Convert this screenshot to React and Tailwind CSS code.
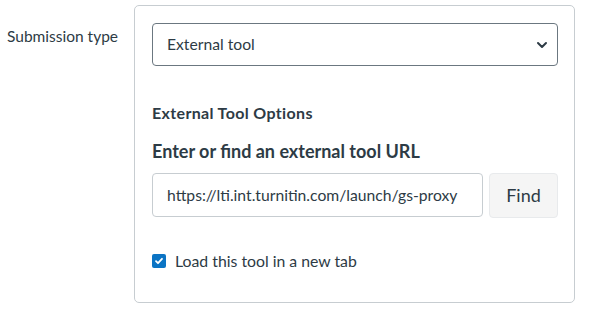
import React, { useState } from "react";

// Canvas 風格的提交類型表單
const App = () => {
  const [newTab, setNewTab] = useState(true);
  const [url, setUrl] = useState("https://lti.int.turnitin.com/launch/gs-proxy");

  return (
    <div
      className="flex w-[595px] h-[319px] bg-white pt-[5px] text-[#2d3b45]"
      style={{ fontFamily: "Lato, 'Noto Sans', sans-serif" }}
    >
      <div className="w-[134px] shrink-0 pl-[7px] pt-[19px] text-[15.5px] leading-[24px]">
        Submission type
      </div>
      <div className="w-[441px] h-[298px] border border-[#c7cdd1] rounded-[5px] pt-[17px] pl-[17px] pr-[16px]">
        <div className="relative h-[43px] border border-[#6b7780] rounded-[4px] flex items-center pl-[14px] text-[15.7px]">
          <span>External tool</span>
          <svg
            className="absolute right-[9px] top-[17px]"
            width="12"
            height="8"
            viewBox="0 0 12 8"
            fill="none"
          >
            <path d="M2 2l4 4 4-4" stroke="#2d3b45" strokeWidth="2" strokeLinecap="round" strokeLinejoin="round" />
          </svg>
        </div>
        <h3 className="mt-[35px] text-[16px] leading-[24px] font-bold tracking-[0.35px]">
          External Tool Options
        </h3>
        <h4 className="mt-[13px] text-[18px] leading-[27px] font-bold">
          Enter or find an external tool URL
        </h4>
        <div className="mt-[8px] flex gap-[6px]">
          <input
            value={url}
            onChange={(e) => setUrl(e.target.value)}
            className="w-[331px] h-[44px] border border-[#c7cdd1] rounded-[4px] px-[14px] text-[15.7px] text-[#2d3b45] outline-none"
            style={{ fontFamily: "Lato, sans-serif" }}
          />
          <button className="w-[69px] h-[45px] bg-[#f5f5f5] border border-[#e8eaec] rounded-[4px] text-[18px] text-[#2d3b45]">
            Find
          </button>
        </div>
        <label className="mt-[31px] flex items-center gap-[9px] text-[15.8px] leading-[24px]">
          <span
            onClick={() => setNewTab(!newTab)}
            className={
              newTab
                ? "w-[14px] h-[14px] rounded-[2px] bg-[#0b74c4] flex items-center justify-center"
                : "w-[14px] h-[14px] rounded-[2px] border border-[#6b7780] bg-white"
            }
          >
            {newTab && (
              <svg width="10" height="10" viewBox="0 0 10 10" fill="none">
                <path d="M2 5.2l2 2 4-4.4" stroke="white" strokeWidth="1.8" strokeLinecap="round" strokeLinejoin="round" />
              </svg>
            )}
          </span>
          <span>Load this tool in a new tab</span>
        </label>
      </div>
    </div>
  );
};

export default App;
